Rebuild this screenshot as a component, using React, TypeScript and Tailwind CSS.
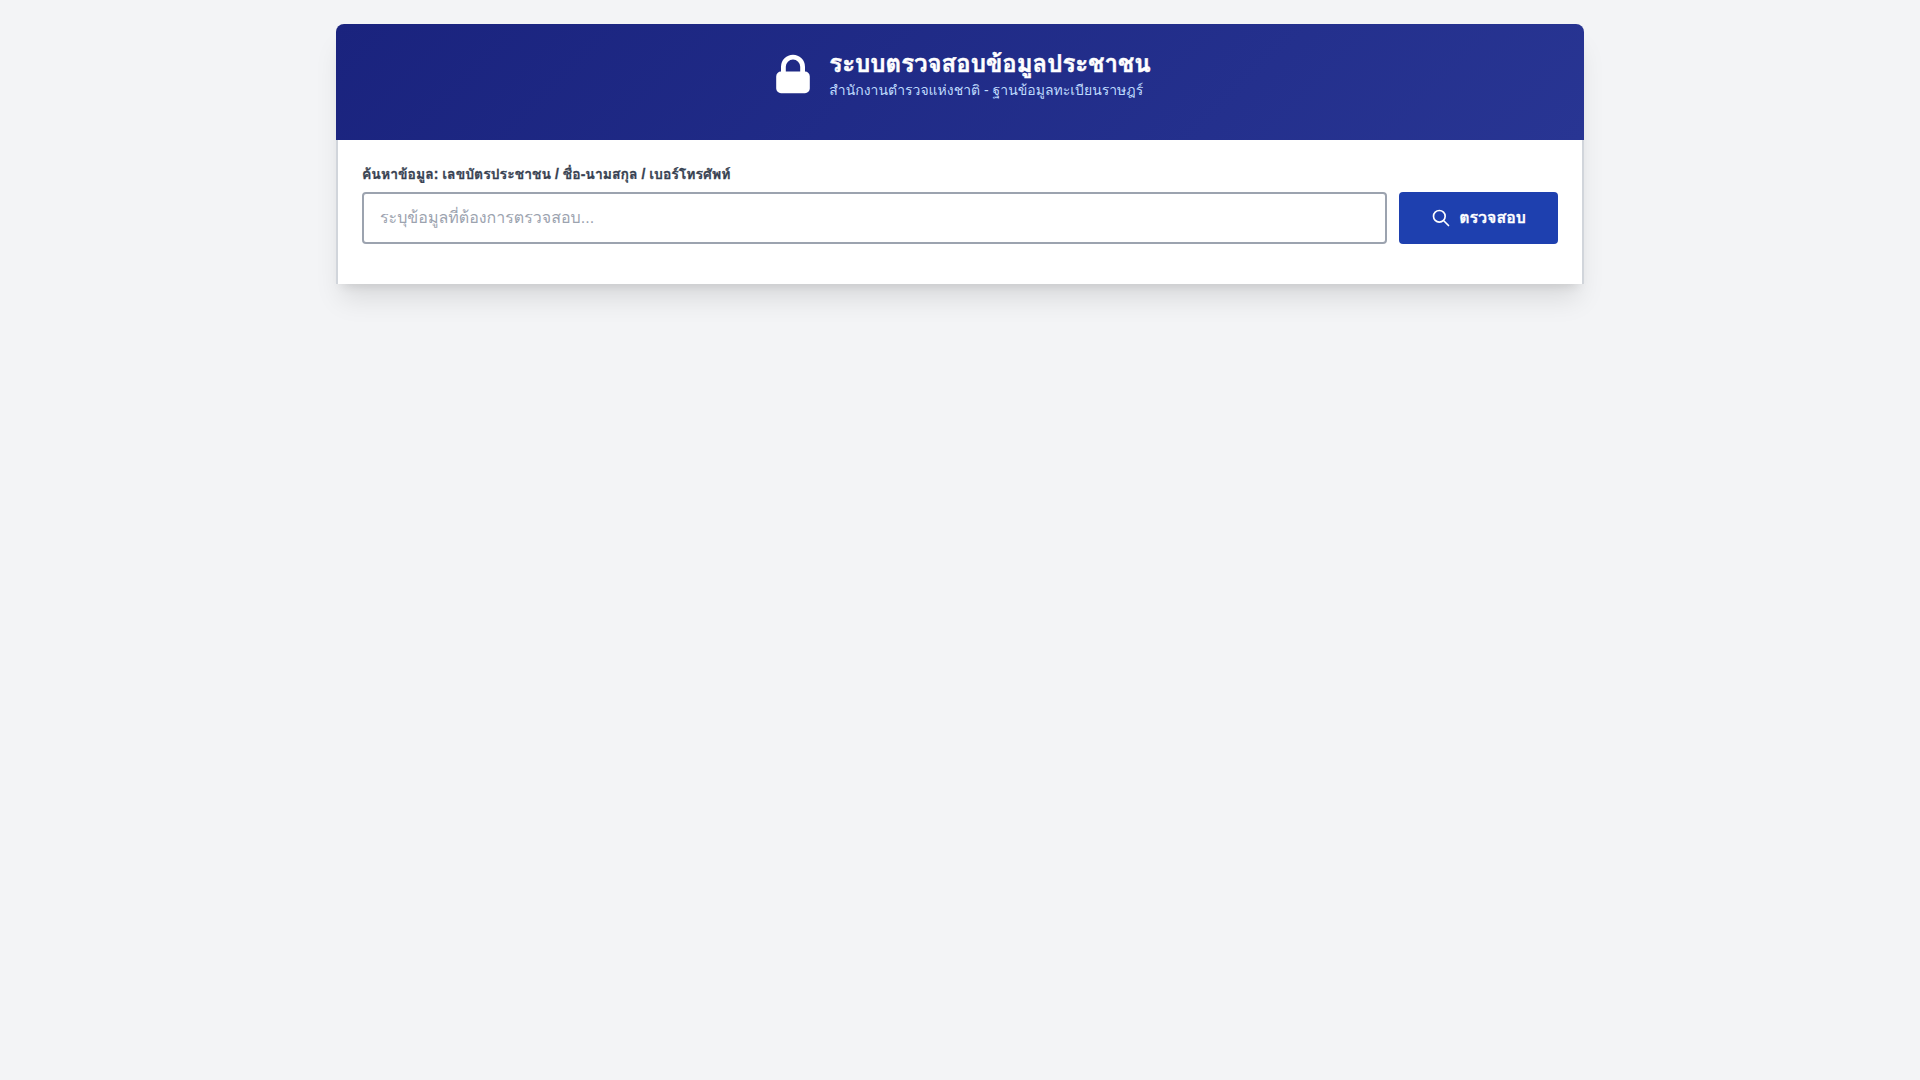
import { useState } from "react";

export default function App() {
  const [query, setQuery] = useState("");

  return (
    <div
      lang="th"
      className="min-h-screen bg-[#f3f4f6] p-6 font-['Liberation_Sans',Loma,sans-serif]"
    >
      <main className="mx-auto max-w-[1248px] shadow-xl">
        <header className="rounded-t-lg bg-linear-135 from-[#1a237e] to-[#283593] p-6 pb-10 text-white">
          <div className="flex items-center justify-center gap-3">
            <svg className="h-12 w-12" viewBox="0 0 20 20" fill="currentColor" aria-hidden="true">
              <path
                fillRule="evenodd"
                clipRule="evenodd"
                d="M5 9V7a5 5 0 0110 0v2a2 2 0 012 2v5a2 2 0 01-2 2H5a2 2 0 01-2-2v-5a2 2 0 012-2zm8-2v2H7V7a3 3 0 016 0z"
              />
            </svg>
            <div>
              <h1 className="text-2xl font-bold [-webkit-text-stroke:0.02em]">
                ระบบตรวจสอบข้อมูลประชาชน
              </h1>
              <p className="text-sm text-[#bfdbfe]">
                สำนักงานตำรวจแห่งชาติ - ฐานข้อมูลทะเบียนราษฎร์
              </p>
            </div>
          </div>
        </header>

        <section className="border-x-2 border-[#d1d5db] bg-white p-6 pb-10">
          <form onSubmit={(e) => e.preventDefault()}>
            <label
              htmlFor="query"
              className="mb-2 block text-sm font-bold text-[#374151] [-webkit-text-stroke:0.02em]"
            >
              ค้นหาข้อมูล: เลขบัตรประชาชน / ชื่อ-นามสกุล / เบอร์โทรศัพท์
            </label>
            <div className="flex gap-3">
              <input
                id="query"
                type="text"
                value={query}
                onChange={(e) => setQuery(e.target.value)}
                placeholder="ระบุข้อมูลที่ต้องการตรวจสอบ..."
                className="min-w-0 flex-1 rounded border-2 border-[#9ca3af] px-4 py-3 text-base placeholder:text-[#9ca3af]"
              />
              <button
                type="submit"
                className="flex items-center gap-2 rounded bg-[#1e40af] px-8 py-3 font-bold text-white [-webkit-text-stroke:0.02em] hover:bg-[#1e3a8a]"
              >
                <svg
                  className="h-5 w-5"
                  viewBox="0 0 24 24"
                  fill="none"
                  stroke="currentColor"
                  strokeWidth={2}
                  aria-hidden="true"
                >
                  <path
                    strokeLinecap="round"
                    strokeLinejoin="round"
                    d="M21 21l-6-6m2-5a7 7 0 11-14 0 7 7 0 0114 0z"
                  />
                </svg>
                ตรวจสอบ
              </button>
            </div>
          </form>
        </section>
      </main>
    </div>
  );
}
